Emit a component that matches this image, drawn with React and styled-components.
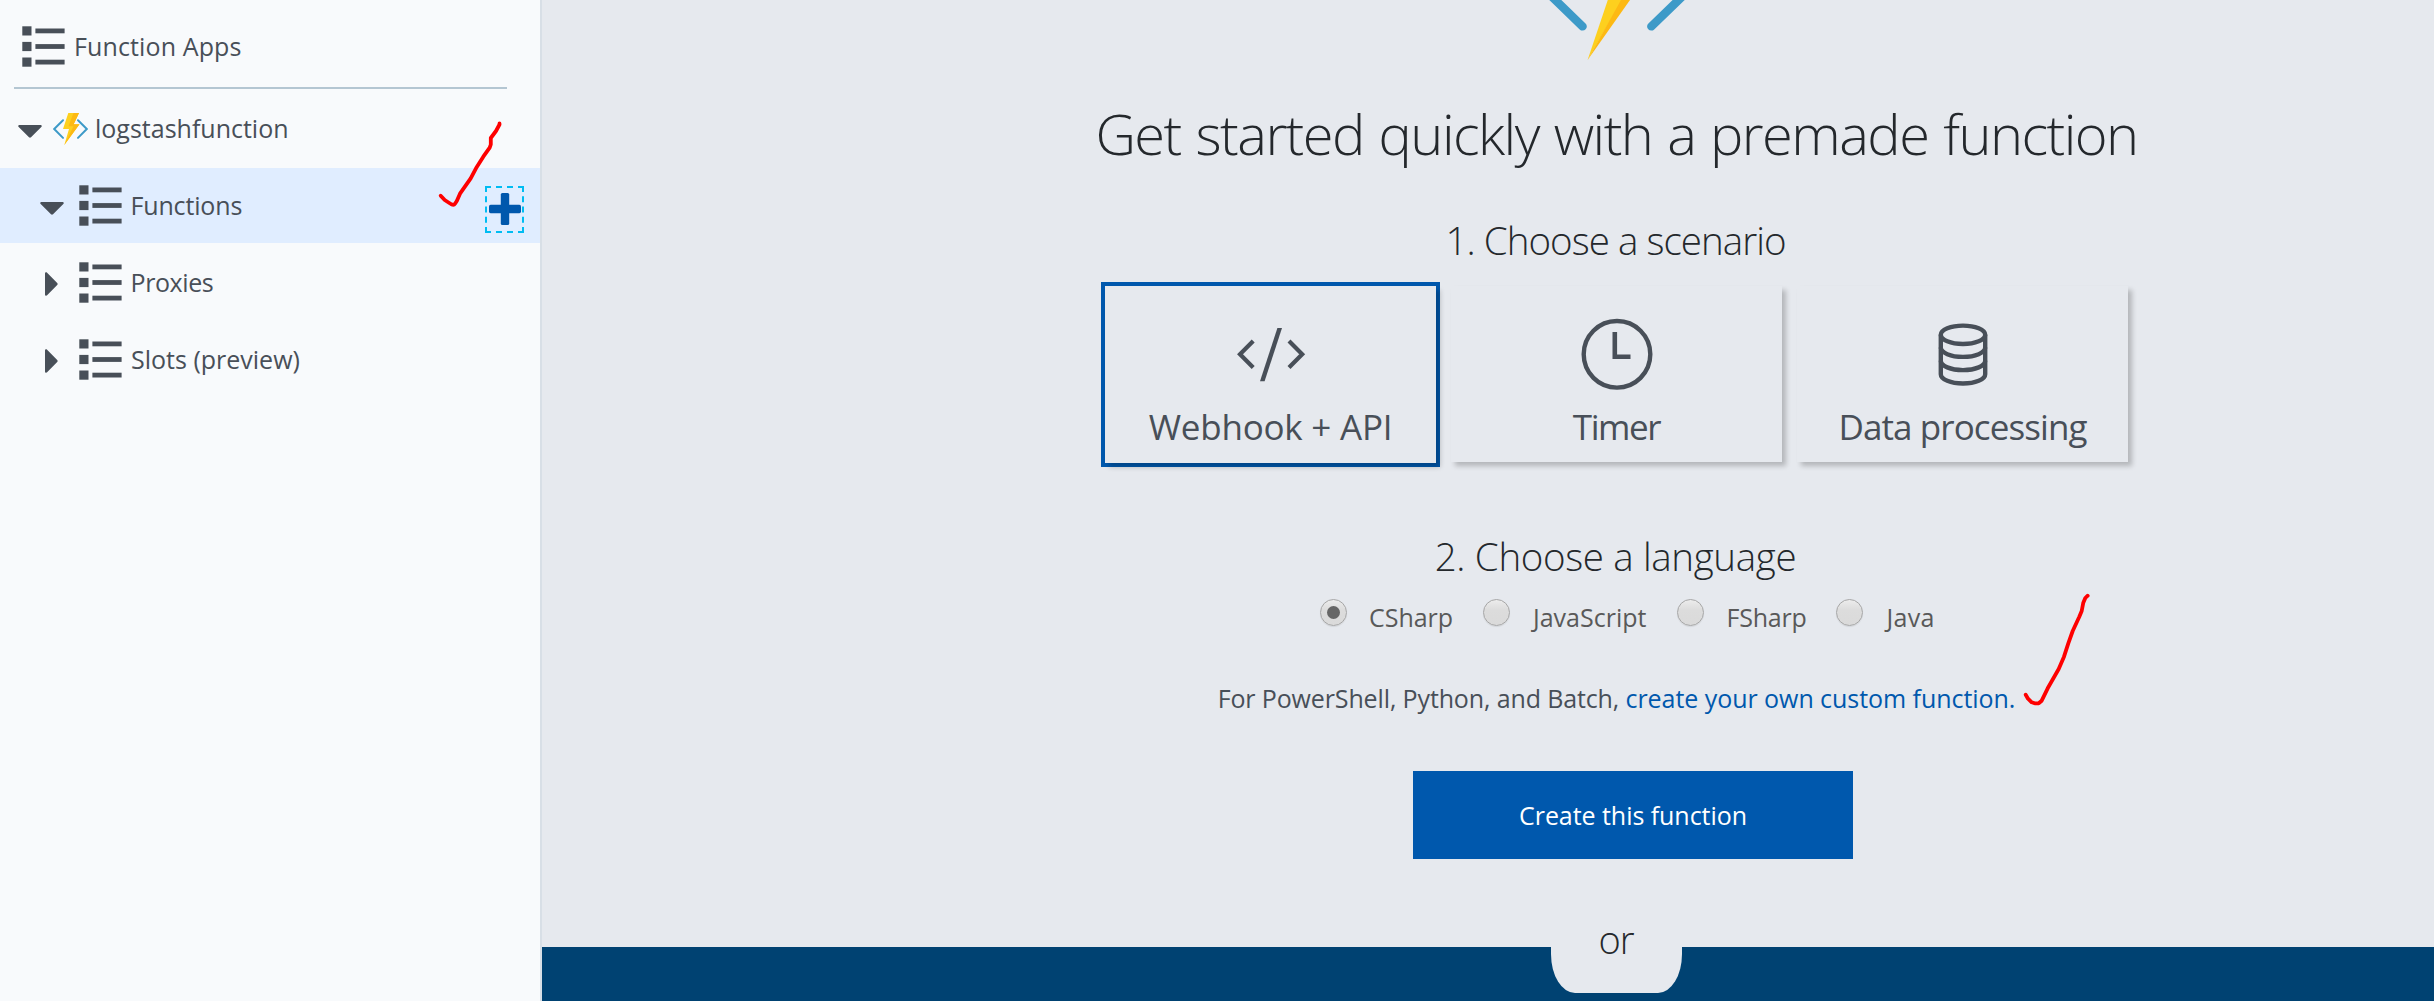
import React from "react";
import styled, { createGlobalStyle } from "styled-components";

const ink = "#484f58";
const blue = "#0058ad";
const surface = "#e6e9ee";

const GlobalStyle = createGlobalStyle`
  *, *::before, *::after { box-sizing: border-box; }
  body {
    margin: 0;
    overflow: hidden;
    background: ${surface};
    font-family: "Open Sans", "Noto Sans", sans-serif;
    color: ${ink};
  }
  svg { display: block; flex: none; }
`;

const Page = styled.div`
  position: relative;
  display: flex;
  width: 2434px;
  height: 1001px;
  overflow: hidden;
`;

/* ---------- sidebar ---------- */

const Sidebar = styled.nav`
  flex: none;
  width: 542px;
  background: #f8fafc;
  border-right: 2px solid #d8dfe6;
  font-size: 25px;
  line-height: 36px;
`;

const SidebarHeader = styled.div`
  display: flex;
  align-items: center;
  height: 89px;
  width: 493px;
  margin-left: 14px;
  padding: 6px 0 0 8px;
  border-bottom: 2px solid #b4c6d2;
`;

const TreeRow = styled.div`
  display: flex;
  align-items: center;
  height: 75px;
  margin-top: 2px;
  padding-left: ${(p) => (p.$nested ? 40 : 18)}px;
  padding-right: 16px;
  background: ${(p) => (p.$selected ? "#e0edff" : "transparent")};
`;

const CaretSlot = styled.span`
  flex: none;
  width: ${(p) => p.$width}px;
  padding-top: ${(p) => (p.$closed ? 3 : 5)}px;
  padding-left: ${(p) => (p.$closed ? 5 : 0)}px;
`;

const TreeLabel = styled.span`
  margin-left: ${(p) => p.$gap}px;
  padding-bottom: 2px;
  letter-spacing: ${(p) => p.$spacing || 0}px;
  white-space: nowrap;
`;

const AddButton = styled.button`
  display: flex;
  align-items: center;
  justify-content: center;
  width: 39px;
  height: 47px;
  margin: 7px 0 0 auto;
  padding: 0;
  border: 2px dashed #00bcf2;
  background: transparent;
`;

/* ---------- main pane ---------- */

const Main = styled.main`
  flex: 1;
  display: flex;
  flex-direction: column;
`;

const Column = styled.section`
  display: flex;
  flex-direction: column;
  align-items: center;
  margin-left: 257px;
`;

const Title = styled.h1`
  margin: 35px 0 0;
  font-size: 56px;
  line-height: 76px;
  font-weight: 300;
  letter-spacing: -1.55px;
  word-spacing: 1.8px;
  color: #24282c;
  white-space: nowrap;
`;

const StepTitle = styled.h2`
  margin: ${(p) => p.$top}px 0 0;
  padding-right: 2px;
  font-size: 38.5px;
  line-height: 50px;
  font-weight: 300;
  letter-spacing: ${(p) => p.$spacing}px;
  color: #24282c;
  white-space: nowrap;
`;

const Cards = styled.div`
  display: flex;
  align-items: flex-start;
  gap: 15px;
  height: 176px;
  margin-top: 21px;
`;

const Card = styled.button`
  display: flex;
  flex-direction: column;
  align-items: center;
  width: 331px;
  height: ${(p) => (p.$selected ? 177 : 176)}px;
  padding: 32px 0 0;
  border: 0;
  background: ${surface};
  color: ${ink};
  font: 400 35px/48px "Open Sans", "Noto Sans", sans-serif;
  letter-spacing: ${(p) => p.$spacing}px;
  white-space: nowrap;
  box-shadow: 4px 4px 5px rgba(0, 0, 0, 0.22)
    ${(p) => (p.$selected ? `, 0 0 0 4px ${blue}` : "")};
`;

const CardLabel = styled.span`
  margin-top: 13px;
`;

const Options = styled.div`
  display: flex;
  margin-top: 18px;
  padding-left: 20px;
`;

const Option = styled.label`
  display: flex;
  align-items: flex-start;
  width: ${(p) => p.$width}px;
  font-size: 25px;
  line-height: 36px;
  letter-spacing: ${(p) => p.$spacing}px;
  color: #595959;
  white-space: nowrap;
`;

const Radio = styled.span`
  flex: none;
  display: flex;
  align-items: center;
  justify-content: center;
  width: 27px;
  height: 27px;
  margin-right: ${(p) => p.$gap}px;
  border: 1px solid #a6a6a6;
  border-radius: 50%;
  background: linear-gradient(#ececec, #dcdcdc 40%, #dadada);
  box-shadow: 0 1px 1px rgba(0, 0, 0, 0.08);
`;

const RadioDot = styled.span`
  width: 13px;
  height: 13px;
  border-radius: 50%;
  background: #666;
`;

const Note = styled.p`
  margin: 45px 0 0;
  font-size: 25px;
  line-height: 36px;
  letter-spacing: -0.13px;
  white-space: nowrap;
`;

const Link = styled.a`
  color: ${blue};
  letter-spacing: -0.05px;
  text-decoration: none;
`;

const CreateButton = styled.button`
  width: 440px;
  height: 88px;
  margin: 55px 0 0 33px;
  padding: 0;
  border: 0;
  background: ${blue};
  color: #fff;
  font: 500 25px/36px "Open Sans", "Noto Sans", sans-serif;
  letter-spacing: -0.05px;
`;

const OrTab = styled.div`
  z-index: 1;
  width: 131px;
  height: 79px;
  margin-top: 55px;
  padding-right: 1px;
  background: ${surface};
  border-radius: 0 0 24px 24px / 0 0 39px 39px;
  font-size: 38px;
  line-height: 50px;
  font-weight: 300;
  letter-spacing: -1px;
  text-align: center;
  color: #24282c;
`;

const Footer = styled.footer`
  flex: 1;
  margin-top: -46px;
  background: #004272;
`;

/* hand-drawn marks lie over the whole page */
const Annotations = styled.svg`
  position: absolute;
  top: 0;
  left: 0;
  pointer-events: none;
`;

/* ---------- icons ---------- */

const ListIcon = () => (
  <svg width="43" height="41" viewBox="0 0 43 41" fill={ink}>
    {[0, 15.6, 31.2].map((y) => (
      <g key={y}>
        <rect x="0.3" y={y + 0.3} width="9.2" height="9.2" />
        <rect x="13.4" y={y + 2.5} width="29.2" height="4.8" />
      </g>
    ))}
  </svg>
);

const CaretDown = () => (
  <svg width="24" height="13" viewBox="0 0 24 13" fill={ink}>
    <path d="M1.5 0h21c1.2 0 1.6 1.3.8 2.1L13 12.2c-.6.6-1.4.6-2 0L.7 2.1C-.1 1.3.3 0 1.5 0z" />
  </svg>
);

const CaretRight = () => (
  <svg width="13" height="24" viewBox="0 0 13 24" fill={ink}>
    <path d="M0 1.5v21c0 1.2 1.3 1.6 2.1.8L12.2 13c.6-.6.6-1.4 0-2L2.1.7C1.3-.1 0 .3 0 1.5z" />
  </svg>
);

const FunctionIcon = () => (
  <svg width="35" height="32" viewBox="0 0 35 32">
    <g fill="none" stroke="#3d9ac8" strokeWidth="2" strokeLinecap="round">
      <path d="M10 7.3L1.2 16L10 24.9" />
      <path d="M25 7.3L33.8 16L25 24.9" />
    </g>
    <path d="M15.3 0H26L20.7 11.3H26.5L11.3 32L16 16H10z" fill="#fdd01e" />
    <path d="M26 0H20.5L15.5 13.3H20.5L11.3 32L26.5 11.3H20.7z" fill="#fdb913" />
  </svg>
);

const FunctionLogo = () => (
  <svg width="140" height="60" viewBox="0 0 140 60">
    <g stroke="#3d9ac8" strokeWidth="8.4" strokeLinecap="round">
      <path d="M-1 -9L35.6 26.4" />
      <path d="M141 -9L104.3 26.4" />
    </g>
    <path d="M60.8 0H75L40.6 60z" fill="#fdd01e" />
    <path d="M74 0H83L40.6 60z" fill="#fdb913" />
  </svg>
);

const CodeIcon = () => (
  <svg width="72" height="72" viewBox="0 0 72 72">
    <g fill="none" stroke={ink} strokeWidth="4.2">
      <path d="M18.2 23L5 36.3L18.2 49.6" />
      <path d="M54 23L67.2 36.3L54 49.6" />
    </g>
    <path d="M42.4 10H47L29.6 63.2H25z" fill={ink} />
  </svg>
);

const ClockIcon = () => (
  <svg width="72" height="72" viewBox="0 0 72 72" fill="none" stroke={ink}>
    <circle cx="36" cy="36.3" r="33.3" strokeWidth="4.4" />
    <path d="M33.8 14V38.8H49.5" strokeWidth="4.6" />
  </svg>
);

const DatabaseIcon = () => (
  <svg width="72" height="72" viewBox="0 0 72 72" fill="none" stroke={ink} strokeWidth="4.4">
    <ellipse cx="36" cy="16.8" rx="22.2" ry="9.2" />
    <path d="M13.8 16.8V56.2C13.8 61.4 23.7 65.5 36 65.5S58.2 61.4 58.2 56.2V16.8" />
    <path d="M13.8 29.6C13.8 34.8 23.7 38.9 36 38.9S58.2 34.8 58.2 29.6" />
    <path d="M13.8 42.8C13.8 48 23.7 52.1 36 52.1S58.2 48 58.2 42.8" />
  </svg>
);

const PlusIcon = () => (
  <svg width="32" height="32" viewBox="0 0 32 32" fill={blue}>
    <rect x="0" y="11.8" width="32" height="8.4" rx="1.6" />
    <rect x="11.8" y="0" width="8.4" height="32" rx="1.6" />
  </svg>
);

const scenarios = [
  { label: "Webhook + API", Icon: CodeIcon, spacing: -0.23, selected: true },
  { label: "Timer", Icon: ClockIcon, spacing: -1.4 },
  { label: "Data processing", Icon: DatabaseIcon, spacing: -0.9 },
];

const languages = [
  { label: "CSharp", width: 163, gap: 22.5, spacing: -0.04, checked: true },
  { label: "JavaScript", width: 194, gap: 23.5, spacing: 0 },
  { label: "FSharp", width: 159, gap: 23, spacing: -0.21 },
  { label: "Java", width: 98, gap: 24, spacing: 0.3 },
];

export default function App() {
  return (
    <Page>
      <GlobalStyle />
      <Sidebar>
        <SidebarHeader>
          <ListIcon />
          <TreeLabel $gap={9} $spacing={0.12}>Function Apps</TreeLabel>
        </SidebarHeader>
        <TreeRow>
          <CaretSlot $width={35}><CaretDown /></CaretSlot>
          <FunctionIcon />
          <TreeLabel $gap={7}>logstashfunction</TreeLabel>
        </TreeRow>
        <TreeRow $nested $selected>
          <CaretSlot $width={39}><CaretDown /></CaretSlot>
          <ListIcon />
          <TreeLabel $gap={8.5} $spacing={-0.15}>Functions</TreeLabel>
          <AddButton aria-label="Add"><PlusIcon /></AddButton>
        </TreeRow>
        <TreeRow $nested>
          <CaretSlot $width={39} $closed><CaretRight /></CaretSlot>
          <ListIcon />
          <TreeLabel $gap={8.5} $spacing={-0.4}>Proxies</TreeLabel>
        </TreeRow>
        <TreeRow $nested>
          <CaretSlot $width={39} $closed><CaretRight /></CaretSlot>
          <ListIcon />
          <TreeLabel $gap={9}>Slots (preview)</TreeLabel>
        </TreeRow>
      </Sidebar>

      <Main>
        <Column>
          <FunctionLogo />
          <Title>Get started quickly with a premade function</Title>
          <StepTitle $top={44} $spacing={-0.95}>1. Choose a scenario</StepTitle>
          <Cards>
            {scenarios.map(({ label, Icon, spacing, selected }) => (
              <Card key={label} $spacing={spacing} $selected={selected}>
                <Icon />
                <CardLabel>{label}</CardLabel>
              </Card>
            ))}
          </Cards>
          <StepTitle $top={69} $spacing={-0.35}>2. Choose a language</StepTitle>
          <Options>
            {languages.map(({ label, width, gap, spacing, checked }) => (
              <Option key={label} $width={width} $spacing={spacing}>
                <Radio $gap={gap}>{checked && <RadioDot />}</Radio>
                {label}
              </Option>
            ))}
          </Options>
          <Note>
            For PowerShell, Python, and Batch, <Link>create your own custom function.</Link>
          </Note>
          <CreateButton>Create this function</CreateButton>
          <OrTab>or</OrTab>
        </Column>
        <Footer />
      </Main>

      <Annotations width="2434" height="1001" viewBox="0 0 2434 1001" fill="none" stroke="#fe0000" strokeWidth="3.8" strokeLinecap="round" strokeLinejoin="round">
        <path d="M440.7 195.7L444.7 200L449.3 203L451.7 204.5Q454 205.3 455 203.8L456.8 201L460 193.7L470.7 178.3L476 168.3L483.3 156.7L489.7 147.7L490.8 144.5V138L496 131L499.5 124.5V123.5" />
        <path d="M2025.7 694.7L2028 698.7L2031.7 702.3L2034.7 703.3H2038.7L2041.7 700.7L2047.7 688.3L2058.7 669L2064 656.7L2068.3 643.3L2072.7 631L2079.3 616.7L2081.7 611L2083.3 602.7L2085.3 598L2087.7 595.7" />
      </Annotations>
    </Page>
  );
}
